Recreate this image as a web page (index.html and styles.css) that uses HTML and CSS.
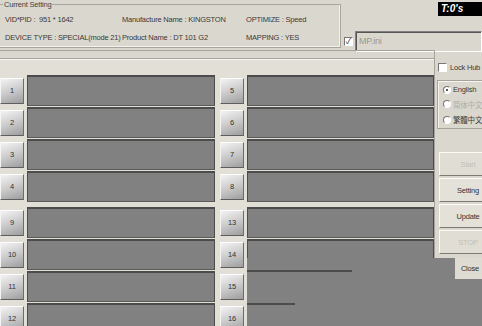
FILE: index.html
```html
<!DOCTYPE html>
<html lang="en">
<head>
    <meta charset="UTF-8">
    <meta name="viewport" content="width=device-width, initial-scale=1.0">
    <title>MP Tool</title>
    <link rel="stylesheet" href="styles.css">
</head>
<body>
    <div class="top">
        <fieldset class="setting">
            <legend>Current Setting</legend>
            <div class="info">
                <span>VID*PID :&nbsp; 951 * 1642</span>
                <span>Manufacture Name : KINGSTON</span>
                <span>OPTIMIZE : Speed</span>
                <span>DEVICE TYPE : SPECIAL(mode 21)</span>
                <span>Product Name : DT 101 G2</span>
                <span>MAPPING : YES</span>
            </div>
        </fieldset>
        <div class="ini">
            <div class="timer">T:0's</div>
            <div class="ini-row">
                <span class="check on">&#10003;</span>
                <div class="field">MP.ini</div>
            </div>
        </div>
    </div>

    <div class="main">
        <div class="slots">
            <div class="board">
                <!-- ports 1-4 / 9-12 -->
                <div class="col">
                    <div class="group">
                        <div class="row"><button class="num">1</button><div class="port"></div></div>
                        <div class="row"><button class="num">2</button><div class="port"></div></div>
                        <div class="row"><button class="num">3</button><div class="port"></div></div>
                        <div class="row"><button class="num">4</button><div class="port"></div></div>
                    </div>
                    <div class="group">
                        <div class="row"><button class="num">9</button><div class="port"></div></div>
                        <div class="row"><button class="num">10</button><div class="port"></div></div>
                        <div class="row"><button class="num">11</button><div class="port"></div></div>
                        <div class="row"><button class="num">12</button><div class="port"></div></div>
                    </div>
                </div>
                <!-- ports 5-8 / 13-16 -->
                <div class="col right">
                    <div class="group">
                        <div class="row"><button class="num">5</button><div class="port"></div></div>
                        <div class="row"><button class="num">6</button><div class="port"></div></div>
                        <div class="row"><button class="num">7</button><div class="port"></div></div>
                        <div class="row"><button class="num">8</button><div class="port"></div></div>
                    </div>
                    <div class="group">
                        <div class="row"><button class="num">13</button><div class="port"></div></div>
                        <div class="row"><button class="num">14</button><div class="port"></div></div>
                        <div class="row"><button class="num">15</button><div class="port"></div></div>
                        <div class="row"><button class="num">16</button><div class="port"></div></div>
                    </div>
                </div>
            </div>
        </div>

        <div class="controls">
            <label class="lock"><span class="check"></span>Lock Hub</label>
            <div class="lang">
                <label class="radio"><span class="dot on"></span>English</label>
                <label class="radio off"><span class="dot"></span>简体中文</label>
                <label class="radio"><span class="dot"></span>繁體中文</label>
            </div>
            <div class="actions">
                <button class="act" disabled>Start</button>
                <button class="act">Setting</button>
                <button class="act">Update</button>
                <button class="act" disabled>STOP</button>
            </div>
        </div>
    </div>

    <!-- unpainted window area over the lower right -->
    <div class="ghost">
        <div class="trace" style="width: 105px; top: 12px;"></div>
        <div class="trace" style="width: 48px; top: 45px;"></div>
    </div>
    <button class="close">Close</button>
</body>
</html>
```

FILE: styles.css
```css
body {
    margin: 0;
    width: 482px;
    height: 326px;
    overflow: hidden;
    position: relative;
    background-color: #dad7ce;
    color: #3a3a3a;
    font-family: "Liberation Sans", Arial, "Noto Sans CJK TC", sans-serif;
    font-size: 7.5px;
    letter-spacing: -0.2px;
}
button {
    font-family: inherit;
    font-size: 7.5px;
    letter-spacing: -0.2px;
    padding: 0;
    cursor: pointer;
}

/* top strip */
.top {
    display: flex;
    height: 50px;
}
.setting {
    box-sizing: border-box;
    width: 341px;
    height: 48px;
    margin: 0;
    padding: 1px 0 0 5px;
    border: 1px solid #a8a59c;
    border-left: none;
    box-shadow: inset -1px -1px 0 #f4f2ec;
}
.setting legend {
    padding: 0 1px;
    margin-left: -2px;
    line-height: 9px;
    color: #444;
}
.info {
    display: grid;
    grid-template-columns: 117px 124px auto;
    grid-auto-rows: 18px;
    align-items: center;
    white-space: nowrap;
}
.ini {
    flex: 1;
    display: flex;
    flex-direction: column;
}
.timer {
    align-self: flex-end;
    width: 41px;
    height: 14px;
    margin-top: 2px;
    padding-left: 3px;
    background-color: #000;
    color: #fff;
    font-size: 10px;
    font-weight: bold;
    font-style: italic;
    letter-spacing: 0;
    line-height: 14px;
}
.ini-row {
    display: flex;
    align-items: center;
    margin-top: 15px;
    padding-left: 3px;
}
.check {
    box-sizing: border-box;
    width: 9px;
    height: 9px;
    border: 1px solid;
    border-color: #777 #fff #fff #777;
    background-color: #fff;
    font-size: 8px;
    line-height: 7px;
    text-align: center;
    color: #222;
}
.field {
    flex: 1;
    height: 19px;
    margin-left: 2px;
    padding-left: 3px;
    border: 1px solid;
    border-color: #808080 #fff #fff #808080;
    box-shadow: inset 1px 1px 0 #555;
    color: #9a978f;
    font-size: 9px;
    line-height: 19px;
}

/* port board */
.main {
    display: flex;
}
.slots {
    width: 437px;
    border-top: 1px solid #a6a39a;
    padding-top: 7px;
}
.board {
    display: flex;
    border-top: 1px solid #a6a39a;
    box-shadow: inset 0 1px 0 #f6f4ee;
    padding-top: 16px;
    background-color: #e2dfd6;
}
.col {
    width: 215px;
}
.col.right {
    width: 214px;
    margin-left: 5px;
}
.group {
    display: flex;
    flex-direction: column;
    gap: 1px;
    margin-bottom: 5px;
    background-color: #e2dfd6;
}
.row {
    display: flex;
    align-items: center;
    height: 31px;
}
.num {
    width: 24px;
    height: 26px;
    border: 1px solid;
    border-color: #fdfdfd #6c6c6c #5e5e5e #f4f4f4;
    background: linear-gradient(160deg, #f3f3f3 0%, #cfcfcf 45%, #9d9d9d 100%);
    color: #333;
}
.port {
    flex: 1;
    box-sizing: border-box;
    height: 31px;
    margin-left: 3px;
    border: 1px solid #4c4c4c;
    border-top-width: 2px;
    border-bottom-color: #5a5a5a;
    background-color: #818181;
}

/* right hand controls */
.controls {
    flex: 1;
    border-left: 1px solid #a6a39a;
    padding-top: 13px;
    white-space: nowrap;
}
.lock {
    display: flex;
    align-items: center;
    gap: 3px;
    padding-left: 3px;
}
.lang {
    margin: 8px 0 0 2px;
    padding: 4px 0 3px 5px;
    height: 40px;
    border: 1px solid #a6a39a;
    border-right: none;
    box-shadow: inset 1px 1px 0 #f6f4ee;
    display: flex;
    flex-direction: column;
    justify-content: space-between;
}
.radio {
    display: flex;
    align-items: center;
    gap: 2px;
}
.radio.off {
    color: #b0ada5;
}
.dot {
    box-sizing: border-box;
    width: 8px;
    height: 8px;
    border-radius: 50%;
    border: 1px solid;
    border-color: #777 #fff #fff #777;
    background-color: #fff;
    position: relative;
}
.dot.on::after {
    content: "";
    position: absolute;
    left: 2px;
    top: 2px;
    width: 2px;
    height: 2px;
    border-radius: 50%;
    background-color: #222;
}
.actions {
    display: flex;
    flex-direction: column;
    gap: 2px;
    margin: 23px 0 0 4px;
}
.act {
    width: 58px;
    height: 24px;
    border: 1px solid;
    border-color: #fbfaf6 #8a877f #7d7a72 #fbfaf6;
    background-color: #e4e1d8;
    color: #333;
}
.act:disabled {
    color: #c2bfb7;
    background-color: #e0ddd4;
}

.ghost {
    position: absolute;
    left: 247px;
    top: 258px;
    right: 0;
    bottom: 0;
    background-color: #818181;
}
.trace {
    position: absolute;
    left: 0;
    height: 2px;
    background-color: #4c4c4c;
}
.close {
    position: absolute;
    left: 455px;
    top: 258px;
    width: 30px;
    height: 21px;
    border: none;
    background-color: #dedbd2;
    color: #333;
}
```
